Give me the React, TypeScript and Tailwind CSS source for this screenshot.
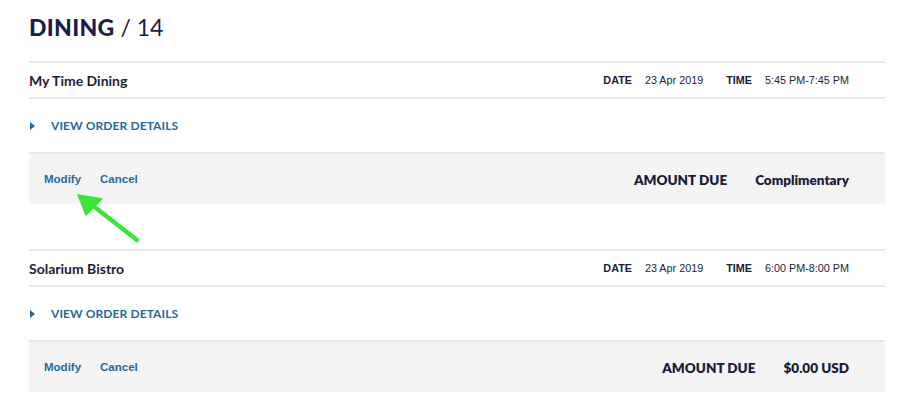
import React from 'react'

type Booking = {
  name: string
  date: string
  time: string
  amount: string
}

const bookings: Booking[] = [
  { name: 'My Time Dining', date: '23 Apr 2019', time: '5:45 PM-7:45 PM', amount: 'Complimentary' },
  { name: 'Solarium Bistro', date: '23 Apr 2019', time: '6:00 PM-8:00 PM', amount: '$0.00 USD' },
]

function BookingCard({ booking }: { booking: Booking }) {
  return (
    <div>
      <div className="flex h-[38px] items-center justify-between border-y-[2px] border-[#e8e8ea]">
        <h3 className="text-[14px] font-bold text-[#1b1d3a] [font-family:Lato,'Open_Sans',sans-serif]">{booking.name}</h3>
        <div className="flex items-center pr-[36px] text-[10.8px] text-[#1b1d3a] [font-family:'Liberation_Sans',Arial,sans-serif]">
          <span className="font-bold">DATE</span>
          <span className="ml-[13px]">{booking.date}</span>
          <span className="ml-[23px] font-bold">TIME</span>
          <span className="ml-[13px]">{booking.time}</span>
        </div>
      </div>
      <div className="flex h-[53px] items-center pt-[1px]">
        <svg width="5" height="8" viewBox="0 0 5 8" className="ml-[1px]">
          <path d="M0 0 L5 4 L0 8 Z" fill="#1f6aa0" />
        </svg>
        <a className="ml-[16px] text-[12px] font-bold tracking-[0.1px] text-[#1f6aa0] [font-family:Lato,'Open_Sans',sans-serif]">
          VIEW ORDER DETAILS
        </a>
      </div>
      <div className="flex h-[52px] items-center justify-between border-t-[2px] border-[#e6e6e8] bg-[#f4f4f5] pl-[15px] pr-[36px] pt-[2px] text-[11.5px] font-bold [font-family:'Liberation_Sans',Arial,sans-serif]">
        <div className="flex gap-[19px] text-[#1f6aa0]">
          <a>Modify</a>
          <a>Cancel</a>
        </div>
        <div className="flex items-center text-[13.5px] font-extrabold text-[#1b1d3a] [font-family:Lato,'Open_Sans',sans-serif]">
          <span>AMOUNT DUE</span>
          <span className="ml-[28px]">{booking.amount}</span>
        </div>
      </div>
    </div>
  )
}

export default function App() {
  return (
    <div className="relative h-[416px] w-[900px] bg-white">
      <div className="box-content w-[856px] pl-[29px] pt-[12px]">
        <h1 className="text-[23px] leading-[30px] text-[#1b1d4e] [font-family:Lato,'Open_Sans',sans-serif]">
          <span className="font-black tracking-[0.3px]">DINING</span>
          <span className="font-normal"> / 14</span>
        </h1>
        <div className="mt-[19px] flex flex-col gap-[45px]">
          {bookings.map((b) => (
            <BookingCard key={b.name} booking={b} />
          ))}
        </div>
      </div>
      <svg className="absolute left-0 top-0" width="900" height="416" viewBox="0 0 900 416">
        <line x1="137" y1="240" x2="92" y2="205" stroke="#3be53b" strokeWidth="4.5" strokeLinecap="round" />
        <path d="M78 195 L102 199 L86 215 Z" fill="#3be53b" stroke="#3be53b" strokeWidth="1.5" strokeLinejoin="round" />
      </svg>
    </div>
  )
}
